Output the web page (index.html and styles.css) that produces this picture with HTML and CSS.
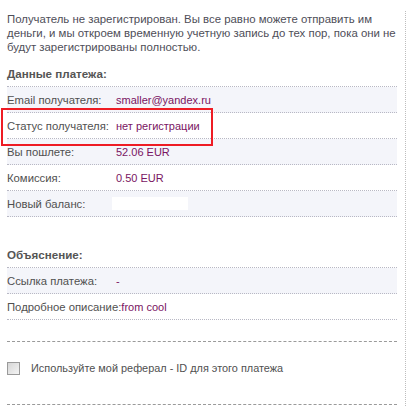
FILE: index.html
```html
<!DOCTYPE html>
<html>
<head>
<meta charset="utf-8">
<link rel="stylesheet" href="styles.css">
</head>
<body>
<div class="frame">
  <div class="content">
    <p class="intro">Получатель не зарегистрирован. Вы все равно можете отправить им деньги, и мы откроем временную учетную запись до тех пор, пока они не будут зарегистрированы полностью.</p>

    <h3 class="heading first">Данные платежа:</h3>
    <div class="rows">
      <div class="row alt"><span class="label">Email получателя:</span><span class="value">smaller@yandex.ru</span></div>
      <div class="row"><span class="label">Статус получателя:</span><span class="value">нет регистрации</span></div>
      <div class="row alt"><span class="label">Вы пошлете:</span><span class="value">52.06 EUR</span></div>
      <div class="row"><span class="label">Комиссия:</span><span class="value">0.50 EUR</span></div>
      <div class="row alt"><span class="label">Новый баланс:</span><span class="value"><span class="blank"></span></span></div>
    </div>

    <h3 class="heading second">Объяснение:</h3>
    <div class="rows">
      <div class="row alt"><span class="label">Ссылка платежа:</span><span class="value">-</span></div>
      <div class="row"><span class="label">Подробное описание:</span><span class="value">from cool</span></div>
    </div>

    <div class="referral">
      <span class="checkbox"></span>
      <span class="ref-text">Используйте мой реферал - ID для этого платежа</span>
    </div>
  </div>
  <div class="highlight"></div>
</div>
</body>
</html>
```

FILE: styles.css
```css
html, body {
  margin: 0;
  padding: 0;
  background: #ffffff;
}

body {
  font-family: "Liberation Sans", Arial, sans-serif;
  font-size: 11.5px;
  color: #505050;
}

.frame {
  position: relative;
  width: 406px;
  height: 406px;
  padding-top: 12px;
  box-sizing: border-box;
}

.frame::after {
  content: "";
  position: absolute;
  left: 405px;
  top: 11px;
  bottom: 0;
  border-left: 1px dotted #bdbdbd;
}

.content {
  padding-left: 7px;
  width: 390px;
}

.intro {
  margin: 0 -6px 0 0;
  font-size: 11.4px;
  line-height: 14px;
  color: #4e4e58;
}

.heading {
  margin: 0;
  font-size: 11.6px;
  line-height: 14px;
  font-weight: bold;
  color: #555555;
  padding-bottom: 5px;
  border-bottom: 1px dotted #b8b8c4;
}

.heading.first {
  margin-top: 13px;
}

.heading.second {
  margin-top: 31px;
}

.row {
  display: flex;
  align-items: center;
  height: 25px;
  border-bottom: 1px dotted #b8b8c4;
}

.row.alt {
  background: #f4f5fa;
}

.label {
  flex-shrink: 0;
  min-width: 109px;
  white-space: nowrap;
  font-size: 11.3px;
  color: #505050;
}

.value {
  color: #7a1462;
  font-size: 11px;
  white-space: nowrap;
}

.blank {
  display: inline-block;
  width: 76px;
  height: 13px;
  background: #ffffff;
  margin-left: -4px;
  vertical-align: middle;
}

.referral {
  margin-top: 21px;
  border-top: 1px dashed #9a9a9a;
  border-bottom: 1px dashed #9a9a9a;
  height: 52px;
  padding-bottom: 10px;
  display: flex;
  align-items: center;
}

.checkbox {
  width: 11px;
  height: 11px;
  border: 1px solid #9a9a9a;
  background: linear-gradient(135deg, #d6d6d6, #f4f4f4);
  box-sizing: content-box;
  flex-shrink: 0;
}

.ref-text {
  margin-left: 11px;
  font-size: 10.9px;
  color: #505050;
}

.highlight {
  position: absolute;
  left: 1px;
  top: 108px;
  width: 208px;
  height: 34px;
  border: 2px solid #ee1c24;
}
```
